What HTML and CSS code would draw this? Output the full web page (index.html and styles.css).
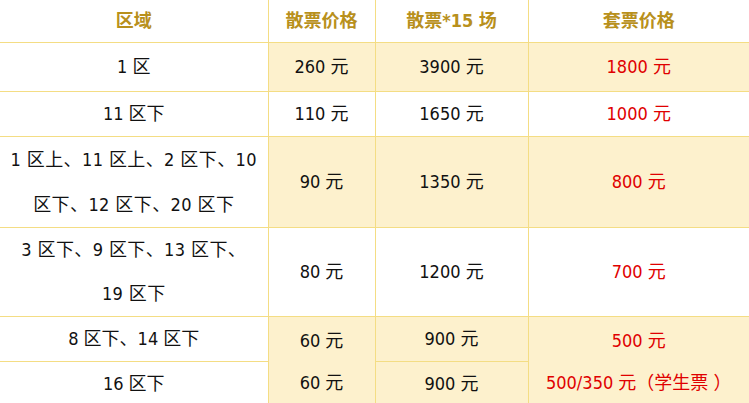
FILE: index.html
```html
<!DOCTYPE html>
<html lang="zh">
<head>
<meta charset="utf-8">
<title>票价</title>
<link rel="stylesheet" href="styles.css">
</head>
<body>
<table class="price">
  <colgroup>
    <col class="c1"><col class="c2"><col class="c3"><col class="c4">
  </colgroup>
  <thead>
    <tr class="r-head">
      <th>区域</th><th>散票价格</th><th>散票*15 场</th><th>套票价格</th>
    </tr>
  </thead>
  <tbody>
    <tr class="r1">
      <td>1 区</td><td class="hl">260 元</td><td class="hl">3900 元</td><td class="hl red">1800 元</td>
    </tr>
    <tr class="r2">
      <td>11 区下</td><td>110 元</td><td>1650 元</td><td class="red">1000 元</td>
    </tr>
    <tr class="r3">
      <td class="multi l45">1 区上、11 区上、2 区下、10<br>区下、12 区下、20 区下</td><td class="hl">90 元</td><td class="hl">1350 元</td><td class="hl red">800 元</td>
    </tr>
    <tr class="r4">
      <td class="multi l44">3 区下、9 区下、13 区下、<br>19 区下</td><td>80 元</td><td>1200 元</td><td class="red">700 元</td>
    </tr>
    <tr class="r5">
      <td>8 区下、14 区下</td><td class="hl two" rowspan="2">60 元<br>60 元</td><td class="hl">900 元</td><td class="hl red two" rowspan="2">500 元<br>500/350 元（学生票 ）</td>
    </tr>
    <tr class="r6">
      <td>16 区下</td><td class="hl">900 元</td>
    </tr>
  </tbody>
</table>
</body>
</html>
```
FILE: styles.css
```css
html, body {
  margin: 0;
  padding: 0;
  background: #ffffff;
}
body {
  font-family: "DejaVu Sans Condensed", "Noto Sans CJK SC", sans-serif;
  font-size: 18px;
  color: #111111;
}
.price {
  width: 749px;
  border-collapse: collapse;
  table-layout: fixed;
}
.c1 { width: 268px; }
.c2 { width: 107px; }
.c3 { width: 153px; }
.c4 { width: 221px; }
.price th,
.price td {
  border: 1px solid #f4dd84;
  text-align: center;
  vertical-align: middle;
  padding: 0;
  line-height: 20px;
  overflow: hidden;
}
.price tr > :first-child { border-left: none; }
.price tr > :last-child { border-right: none; }
.price thead th { border-top: none; }
.price th {
  font-weight: bold;
  font-size: 18px;
  color: #b8901c;
}
.r-head th { height: 42px; }
.r1 td { height: 48px; }
.r2 td { height: 44px; }
.r3 td { height: 89px; }
.r4 td { height: 87px; }
.r5 td { height: 44px; }
.r6 td { height: 44px; }
.multi {
  padding: 0 2px !important;
  letter-spacing: 0.4px;
  white-space: nowrap;
}
.l45 { line-height: 45px !important; }
.l44 { line-height: 44px !important; }
.two { line-height: 42px !important; }
.hl { background: #fdf1cd; }
.red { color: #e00000; }
```
